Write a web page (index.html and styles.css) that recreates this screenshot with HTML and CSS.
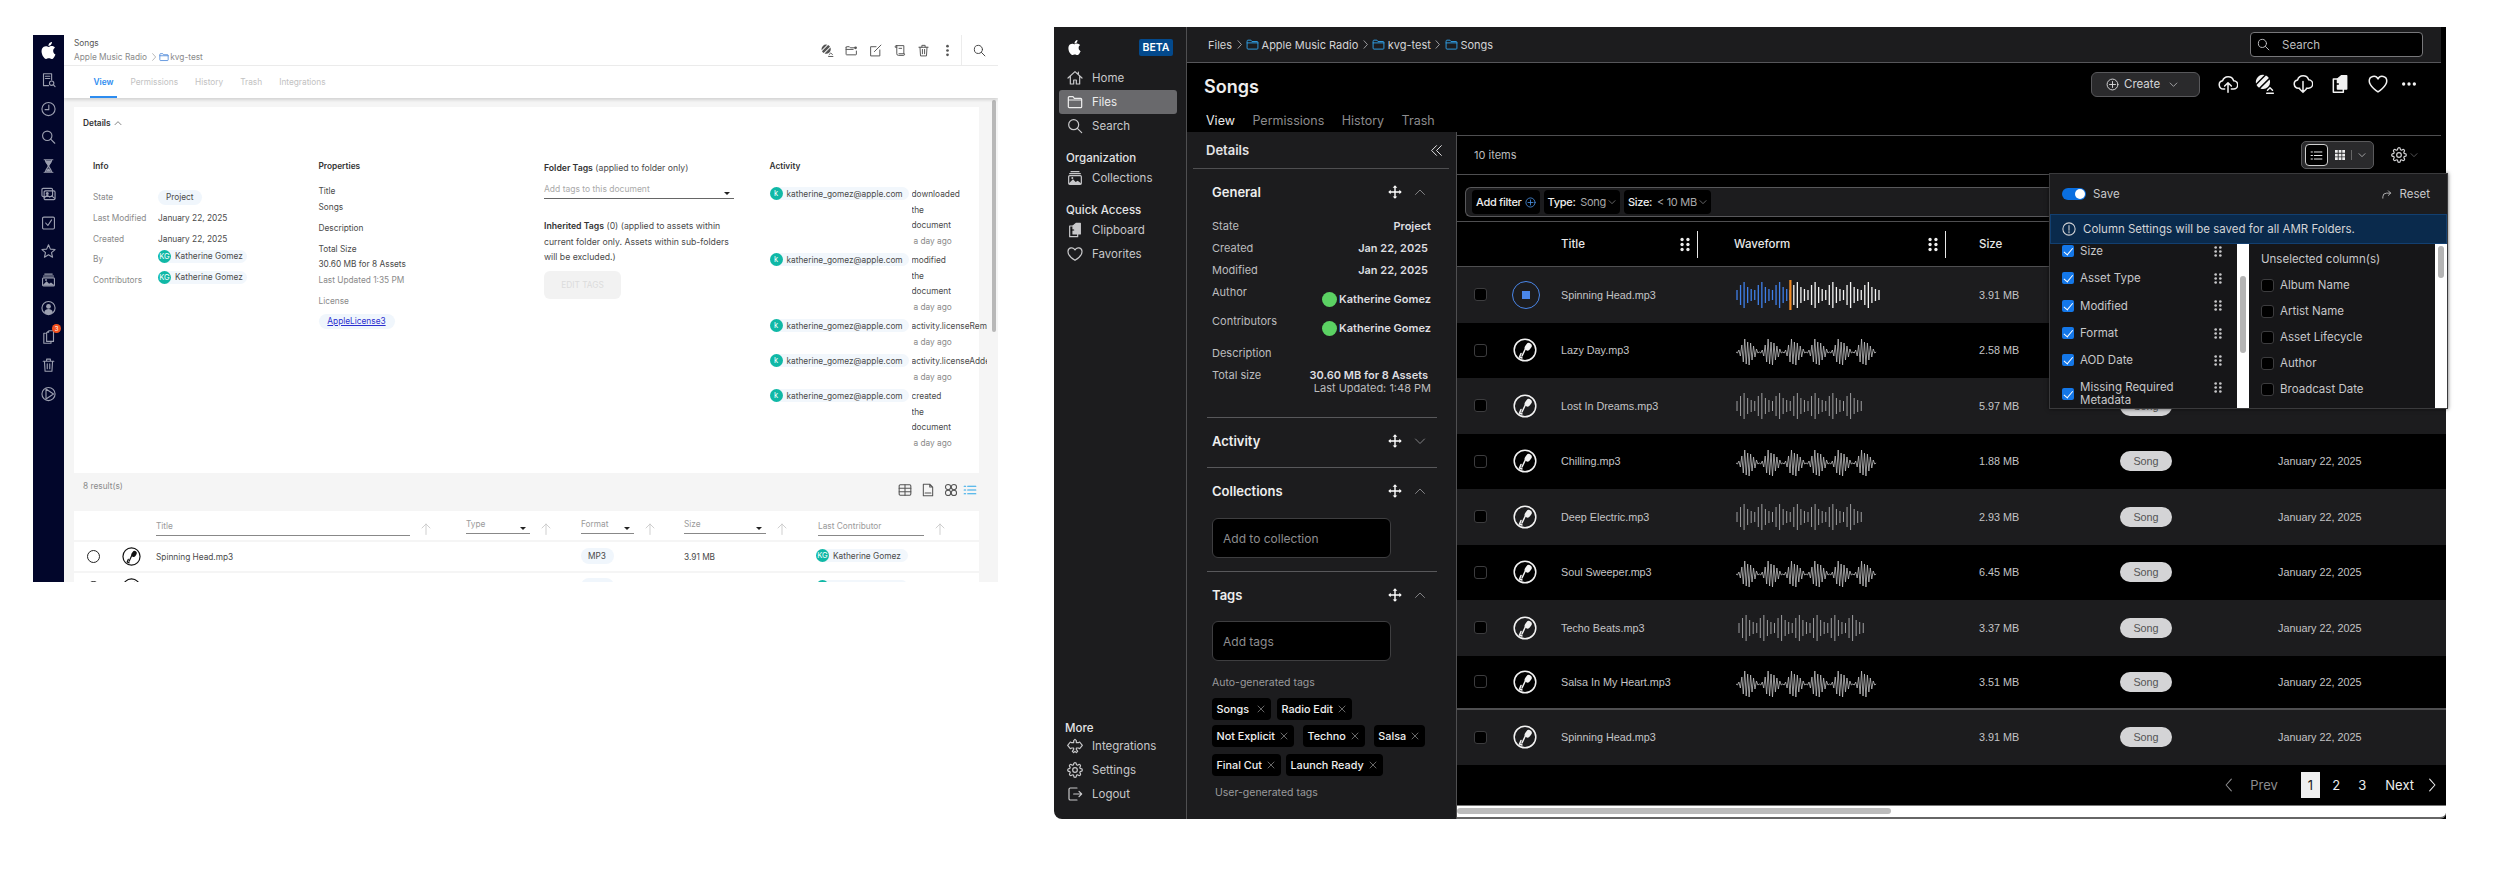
FILE: index.html
```html
<!DOCTYPE html>
<html lang="en">
<head>
<meta charset="utf-8">
<title>Songs</title>
<link rel="stylesheet" href="styles.css">
</head>
<body>
<svg class="sprite" xmlns="http://www.w3.org/2000/svg">
  <symbol id="i-apple" viewBox="0 0 24 24"><path fill="currentColor" stroke="none" d="M12.152 6.896c-.948 0-2.415-1.078-3.96-1.04-2.04.027-3.91 1.183-4.961 3.014-2.117 3.675-.546 9.103 1.519 12.09 1.013 1.454 2.208 3.09 3.792 3.039 1.52-.065 2.09-.987 3.935-.987 1.831 0 2.35.987 3.96.948 1.637-.026 2.676-1.48 3.676-2.948 1.156-1.688 1.636-3.325 1.662-3.415-.039-.013-3.182-1.221-3.22-4.857-.026-3.04 2.48-4.494 2.597-4.559-1.429-2.09-3.623-2.324-4.39-2.376-2-.156-3.675 1.09-4.61 1.09zM15.53 3.83c.843-1.012 1.4-2.427 1.245-3.83-1.207.052-2.662.805-3.532 1.818-.78.896-1.454 2.338-1.273 3.714 1.338.104 2.715-.688 3.559-1.701"/></symbol>
  <symbol id="i-docsearch" viewBox="0 0 24 24"><path d="M12 21H4V2h13v10M7 6h7M7 9.500h7"/><circle cx="17" cy="17" r="3.500"/><path d="m19.500 19.500 3 3"/></symbol>
  <symbol id="i-clock" viewBox="0 0 24 24"><circle cx="12" cy="12" r="10.500"/><path d="M12.500 5.500v7.500H6.500"/></symbol>
  <symbol id="i-search" viewBox="0 0 24 24"><circle cx="10" cy="10" r="7.500"/><path d="m15.500 15.500 6.500 6.500"/></symbol>
  <symbol id="i-hourglass" viewBox="0 0 24 24"><path d="M5 2h14M5 22h14M7 2c0 5 4.500 7 4.500 10S7 17 7 22M17 2c0 5-4.500 7-4.500 10s4.500 5 4.500 10"/><path fill="currentColor" stroke="none" d="M7 3h10c0 4-3.500 6-5 8-1.500-2-5-4-5-8zM8 21c.5-3 3-4 4-5.500 1 1.500 3.500 2.500 4 5.500z"/></symbol>
  <symbol id="i-photos" viewBox="0 0 24 24"><rect x="1.500" y="3" width="17" height="13" rx="2"/><rect x="5" y="7" width="17.500" height="14" rx="2"/><path d="m5 18 5-4 4 3 3-2 5 4"/><circle cx="10" cy="11" r="1.500" fill="currentColor"/></symbol>
  <symbol id="i-check" viewBox="0 0 24 24"><rect x="2.500" y="2.500" width="19" height="19" rx="2"/><path d="m7.500 12 3.500 4 6-9"/></symbol>
  <symbol id="i-star" viewBox="0 0 24 24"><path d="m12 2 3 7 7.500.7-5.700 5 1.700 7.300-6.500-3.900L5.500 22l1.700-7.300-5.700-5L9 9z"/></symbol>
  <symbol id="i-gallery" viewBox="0 0 24 24"><path d="M6 2.500h12M4 5.500h16" /><rect x="2.500" y="8.500" width="19" height="13" rx="1.500"/><path fill="currentColor" stroke="none" d="m3 20 6-6 4 4 3-2 5 4v1H3z"/><circle cx="8" cy="12" r="1.500" fill="currentColor" stroke="none"/></symbol>
  <symbol id="i-user" viewBox="0 0 24 24"><circle cx="12" cy="12" r="10.500"/><circle cx="12" cy="9.500" r="3.800" fill="currentColor" stroke="none"/><path fill="currentColor" stroke="none" d="M5 19c1-4 4-5.500 7-5.500s6 1.500 7 5.500c-2 2-4.500 3-7 3s-5-1-7-3z"/></symbol>
  <symbol id="i-clip" viewBox="0 0 24 24"><path d="M7 6H4.500v16H16v-3"/><path d="M9 5l4-3h7v17H9z"/><path fill="currentColor" stroke="none" d="M9 5l4-3v3z"/></symbol>
  <symbol id="i-clipfill" viewBox="0 0 24 24"><path d="M9 6H4v16h12v-4"/><path fill="currentColor" d="M9 6l5-4h6v16H9z"/><path stroke="#000" d="M7 12h3"/></symbol>
  <symbol id="i-trash" viewBox="0 0 24 24"><path d="M3.500 6h17M9 6V2.500h6V6M5.500 6l1 16h11l1-16M10 10v8M14 10v8"/></symbol>
  <symbol id="i-playc" viewBox="0 0 24 24"><circle cx="12" cy="12" r="10.500"/><path d="M8 4v16l12-8z"/></symbol>
  <symbol id="i-home" viewBox="0 0 24 24"><path d="M1.500 12 12 2.500 22.500 12M5 9.500V21h5v-6h4v6h5V9.500M17 3v3"/></symbol>
  <symbol id="i-folder" viewBox="0 0 24 24"><path d="M2 5.500a1.500 1.500 0 0 1 1.500-1.500H9l2 2.500h9.500A1.500 1.500 0 0 1 22 8v11a1.500 1.500 0 0 1-1.500 1.500h-17A1.500 1.500 0 0 1 2 19zM2 9h20"/></symbol>
  <symbol id="i-heart" viewBox="0 0 24 24"><path d="M12 21.500S1.500 15 1.500 8.500A5.500 5.500 0 0 1 12 6a5.500 5.500 0 0 1 10.500 2.500C22.500 15 12 21.500 12 21.500z"/></symbol>
  <symbol id="i-puzzle" viewBox="0 0 24 24"><path d="M7 7h3V4l2-2 2 2v3h3l2-1 4 5-4 5-2-1h-3v2l2 3-2 2-2-2-2 2-2-2 2-3v-2H7l-2 1-4-5 4-5z"/></symbol>
  <symbol id="i-gear" viewBox="0 0 24 24"><circle cx="12" cy="12" r="3.500"/><path d="M19.400 15a1.650 1.650 0 0 0 .33 1.820l.06.06a2 2 0 0 1 0 2.830 2 2 0 0 1-2.830 0l-.06-.06a1.650 1.650 0 0 0-1.820-.33 1.650 1.650 0 0 0-1 1.510V21a2 2 0 0 1-2 2 2 2 0 0 1-2-2v-.09A1.650 1.650 0 0 0 9 19.400a1.650 1.650 0 0 0-1.820.33l-.06.06a2 2 0 0 1-2.830 0 2 2 0 0 1 0-2.830l.06-.06a1.650 1.650 0 0 0 .33-1.820 1.650 1.650 0 0 0-1.510-1H3a2 2 0 0 1-2-2 2 2 0 0 1 2-2h.09A1.650 1.650 0 0 0 4.600 9a1.650 1.650 0 0 0-.33-1.820l-.06-.06a2 2 0 0 1 0-2.830 2 2 0 0 1 2.830 0l.06.06a1.650 1.650 0 0 0 1.820.33H9a1.650 1.650 0 0 0 1-1.510V3a2 2 0 0 1 2-2 2 2 0 0 1 2 2v.09a1.650 1.650 0 0 0 1 1.510 1.650 1.650 0 0 0 1.820-.33l.06-.06a2 2 0 0 1 2.830 0 2 2 0 0 1 0 2.830l-.06.06a1.650 1.650 0 0 0-.33 1.820V9a1.650 1.650 0 0 0 1.510 1H21a2 2 0 0 1 2 2 2 2 0 0 1-2 2h-.09a1.650 1.650 0 0 0-1.510 1z"/></symbol>
  <symbol id="i-logout" viewBox="0 0 24 24"><path d="M15 3H5a2 2 0 0 0-2 2v14a2 2 0 0 0 2 2h10M10 12h12M18 8l4 4-4 4"/></symbol>
  <symbol id="i-move" viewBox="0 0 24 24"><path fill="currentColor" stroke="none" d="m12 .5-4 4h2.800v6.300H4.500V8l-4 4 4 4v-2.800h6.300v6.300H8l4 4 4-4h-2.800v-6.300h6.300V16l4-4-4-4v2.800h-6.300V4.500H16z"/></symbol>
  <symbol id="i-up" viewBox="0 0 24 24"><path d="m3 17 9-9 9 9"/></symbol>
  <symbol id="i-down" viewBox="0 0 24 24"><path d="m3 8 9 9 9-9"/></symbol>
  <symbol id="i-left" viewBox="0 0 24 24"><path d="M16 2 7 12l9 10"/></symbol>
  <symbol id="i-right" viewBox="0 0 24 24"><path d="m8 2 9 10-9 10"/></symbol>
  <symbol id="i-x" viewBox="0 0 24 24"><path d="m3 3 18 18M21 3 3 21"/></symbol>
  <symbol id="i-arrowup" viewBox="0 0 24 24"><path d="M12 23V2M4 10l8-8 8 8"/></symbol>
  <symbol id="i-dbl" viewBox="0 0 24 24"><path d="M12 3 3 12l9 9M21 3l-9 9 9 9"/></symbol>
  <symbol id="i-plusc" viewBox="0 0 24 24"><circle cx="12" cy="12" r="10"/><path d="M12 6.500v11M6.500 12h11"/></symbol>
  <symbol id="i-upload" viewBox="0 0 24 24"><path d="M8 18H6.500a5 5 0 0 1-1-9.900A7 7 0 0 1 18.800 8a5 5 0 0 1-.3 10H16M12 22V11M8 14.500l4-4 4 4"/></symbol>
  <symbol id="i-download" viewBox="0 0 24 24"><path d="M8 17H6.500a5 5 0 0 1-1-9.900A7 7 0 0 1 18.800 7a5 5 0 0 1-.3 10H16M12 9v13M8 18l4 4 4-4"/></symbol>
  <symbol id="i-tagball" viewBox="0 0 24 24"><path fill="currentColor" stroke="none" d="M11.310 1.190A8.500 8.500 0 0 0 1.190 11.310zM13.170 1.830a8.500 8.500 0 0 1 3.460 3.040L4.870 16.630a8.500 8.500 0 0 1-3.040-3.460zM17.460 6.540A8.500 8.500 0 0 1 6.540 17.460z"/><path d="M15 19.500l3-3 3 3M14 23h8"/></symbol>
  <symbol id="i-folderup" viewBox="0 0 24 24"><path d="M2 6a1 1 0 0 1 1-1h5l2 2h9M2 6v13a1 1 0 0 0 1 1h17a1 1 0 0 0 1-1v-6M2 10h13"/><circle cx="19.500" cy="7" r="2.500" fill="currentColor" stroke="none"/></symbol>
  <symbol id="i-edit" viewBox="0 0 24 24"><path d="M13 5H3v17h17V11M10 14 22 2"/></symbol>
  <symbol id="i-scroll" viewBox="0 0 24 24"><path d="M6 3h14v15M6 3a2 2 0 0 0-2 2v1h3M7 3v15a3 3 0 0 0 3 3h10a2 2 0 0 0 1-3H11M11 8h5"/></symbol>
  <symbol id="i-vdots" viewBox="0 0 24 24"><circle cx="12" cy="4" r="2.500" fill="currentColor" stroke="none"/><circle cx="12" cy="12" r="2.500" fill="currentColor" stroke="none"/><circle cx="12" cy="20" r="2.500" fill="currentColor" stroke="none"/></symbol>
  <symbol id="i-hdots" viewBox="0 0 24 24"><circle cx="4" cy="12" r="2.500" fill="currentColor" stroke="none"/><circle cx="12" cy="12" r="2.500" fill="currentColor" stroke="none"/><circle cx="20" cy="12" r="2.500" fill="currentColor" stroke="none"/></symbol>
  <symbol id="i-handle" viewBox="0 0 12 18"><g fill="currentColor" stroke="none"><circle cx="2.500" cy="3" r="2"/><circle cx="9.500" cy="3" r="2"/><circle cx="2.500" cy="9" r="2"/><circle cx="9.500" cy="9" r="2"/><circle cx="2.500" cy="15" r="2"/><circle cx="9.500" cy="15" r="2"/></g></symbol>
  <symbol id="i-list" viewBox="0 0 24 24"><path d="M8 5.500h14M8 12h14M8 18.500h14M2 5.500h2.500M2 12h2.500M2 18.500h2.500"/></symbol>
  <symbol id="i-grid" viewBox="0 0 24 24"><path fill="currentColor" stroke="none" d="M2 2h5.500v5.500H2zM9.300 2h5.500v5.500H9.300zM16.500 2H22v5.500h-5.500zM2 9.300h5.500v5.500H2zM9.300 9.300h5.500v5.500H9.300zM16.500 9.300H22v5.500h-5.500zM2 16.500h5.500V22H2zM9.300 16.500h5.500V22H9.300zM16.500 16.500H22V22h-5.500z"/></symbol>
  <symbol id="i-info" viewBox="0 0 24 24"><circle cx="12" cy="12" r="10.500"/><path d="M12 6v8M12 16.500v2"/></symbol>
  <symbol id="i-reset" viewBox="0 0 24 24"><path d="M4 20v-3a8 8 0 0 1 8-8h9M16 4l5 5-5 5" /></symbol>
  <symbol id="i-table" viewBox="0 0 24 24"><rect x="2" y="3" width="20" height="18" rx="2"/><path d="M2 9h20M2 15h20M12 3v18"/></symbol>
  <symbol id="i-file" viewBox="0 0 24 24"><path d="M4 22V2h11l5 5v15zM15 2v5h5M7 17h10"/></symbol>
  <symbol id="i-rings" viewBox="0 0 24 24"><circle cx="7" cy="7" r="4.500"/><circle cx="17" cy="7" r="4.500"/><circle cx="7" cy="17" r="4.500"/><circle cx="17" cy="17" r="4.500"/></symbol>
  <symbol id="i-mic" viewBox="0 0 24 24"><circle cx="12" cy="12" r="10.800"/><rect x="12.300" y="4.800" width="5.800" height="8" rx="2.900" transform="rotate(35 15.200 8.800)" fill="currentColor" stroke="none"/><path d="m12.500 10.500-3.500 7.500M8 15.500l-1.500 3.500 2.500 1"/></symbol>
  <symbol id="w-bars" viewBox="0 0 146 30"><path d="M1 10v10m3.550-15v20m3.550-23v26m3.550-21v16m3.550-14v12m3.550-11v10m3.550-15v20m3.550-23v26m3.550-21v16m3.550-14v12m3.550-11v10m3.550-15v20m3.550-23v26m3.550-21v16m3.550-14v12m3.550-11v10m3.550-15v20m3.550-23v26m3.550-21v16m3.550-14v12m3.550-11v10m3.550-15v20m3.550-23v26m3.550-21v16m3.550-14v12m3.550-11v10m3.550-15v20m3.550-23v26m3.550-21v16m3.550-14v12m3.550-11v10m3.550-15v20m3.550-23v26m3.550-21v16m3.550-14v12m3.550-11v10"/></symbol>
  <symbol id="w-spike" viewBox="0 0 146 30"><path d="M0 17l1.460 1 1.460-3 1.460 6 1.460-11 1.460 17 1.460-23 1.460 25 1.460-22 1.460 23 1.460-22 1.460 17 1.460-14 1.460 11 1.460-8 1.460 4 1.460-1 1.460 1 1.460-3 1.460 6 1.460-11 1.460 17 1.460-23 1.460 25 1.460-22 1.460 23 1.460-22 1.460 17 1.460-14 1.460 11 1.460-8 1.460 4 1.460-1 1.460 1 1.460-3 1.460 6 1.460-11 1.460 17 1.460-23 1.460 25 1.460-22 1.460 23 1.460-22 1.460 17 1.460-14 1.460 11 1.460-8 1.460 4 1.460-1 1.460 1 1.460-3 1.460 6 1.460-11 1.460 17 1.460-23 1.460 25 1.460-22 1.460 23 1.460-22 1.460 17 1.460-14 1.460 11 1.460-8 1.460 4 1.460-1 1.460 1 1.460-3 1.460 6 1.460-11 1.460 17 1.460-23 1.460 25 1.460-22 1.460 23 1.460-22 1.460 17 1.460-14 1.460 11 1.460-8 1.460 4 1.460-1 1.460 1 1.460-3 1.460 6 1.460-11 1.460 17 1.460-23 1.460 25 1.460-22 1.460 23 1.460-22 1.460 17 1.460-14 1.460 11 1.460-8 1.460 4 1.460-1"/></symbol>
</svg>

<section class="light">
  <nav class="rail">
    <svg class="ic rail-logo"><use href="#i-apple"/></svg>
    <svg class="ic"><use href="#i-docsearch"/></svg>
    <svg class="ic"><use href="#i-clock"/></svg>
    <svg class="ic"><use href="#i-search"/></svg>
    <svg class="ic"><use href="#i-hourglass"/></svg>
    <svg class="ic"><use href="#i-photos"/></svg>
    <svg class="ic"><use href="#i-check"/></svg>
    <svg class="ic"><use href="#i-star"/></svg>
    <svg class="ic"><use href="#i-gallery"/></svg>
    <svg class="ic"><use href="#i-user"/></svg>
    <span class="rail-badged"><svg class="ic"><use href="#i-clip"/></svg><span class="badge">3</span></span>
    <svg class="ic"><use href="#i-trash"/></svg>
    <svg class="ic"><use href="#i-playc"/></svg>
  </nav>
  <div class="lmain">
    <header class="lhead">
      <div class="lcrumbs">
        <div class="lcrumb-title">Songs</div>
        <div class="lcrumb-path">Apple Music Radio <svg class="ic ic-8"><use href="#i-right"/></svg> <svg class="ic ic-10 blue"><use href="#i-folder"/></svg>kvg-test</div>
      </div>
      <div class="lactions">
        <svg class="ic ic-13"><use href="#i-tagball"/></svg>
        <svg class="ic ic-13"><use href="#i-folderup"/></svg>
        <svg class="ic ic-13"><use href="#i-edit"/></svg>
        <svg class="ic ic-13"><use href="#i-scroll"/></svg>
        <svg class="ic ic-13"><use href="#i-trash"/></svg>
        <svg class="ic ic-13"><use href="#i-vdots"/></svg>
        <span class="lsearch"><svg class="ic ic-13"><use href="#i-search"/></svg></span>
      </div>
    </header>
    <div class="ltabs">
      <span class="ltab on">View</span><span class="ltab">Permissions</span><span class="ltab">History</span><span class="ltab">Trash</span><span class="ltab">Integrations</span>
    </div>
    <div class="lbody">
      <div class="lcontent">
        <div class="lpanel">
          <div class="ldetails">Details <svg class="ic ic-8"><use href="#i-up"/></svg></div>
          <div class="lcols">
            <div class="lcol">
              <h3 class="lh">Info</h3>
              <div class="irow"><span class="ilabel">State</span><span class="pill">Project</span></div>
              <div class="irow"><span class="ilabel">Last Modified</span><span>January 22, 2025</span></div>
              <div class="irow"><span class="ilabel">Created</span><span>January 22, 2025</span></div>
              <div class="irow"><span class="ilabel">By</span><span class="who"><i class="ava">KG</i>Katherine Gomez</span></div>
              <div class="irow"><span class="ilabel">Contributors</span><span class="who"><i class="ava">KG</i>Katherine Gomez</span></div>
            </div>
            <div class="lcol">
              <h3 class="lh">Properties</h3>
              <div class="pgroup"><p>Title</p><p>Songs</p></div>
              <div class="pgroup"><p>Description</p></div>
              <div class="pgroup"><p>Total Size</p><p>30.60 MB for 8 Assets</p><p class="muted">Last Updated 1:35 PM</p></div>
              <div class="pgroup"><p class="muted">License</p><a class="lic" href="#">AppleLicense3</a></div>
            </div>
            <div class="lcol">
              <p class="ftitle"><b>Folder Tags</b> (applied to folder only)</p>
              <div class="finput"><span>Add tags to this document</span><i class="caret"></i></div>
              <p class="inh"><b>Inherited Tags</b> (0) (applied to assets within current folder only. Assets within sub-folders will be excluded.)</p>
              <button class="editbtn" type="button">EDIT TAGS</button>
            </div>
            <div class="lcol">
              <h3 class="lh">Activity</h3>
              <div class="act"><span class="who mail"><i class="ava">k</i>katherine_gomez@apple.com</span><div class="acttext"><p>downloaded</p><p>the</p><p>document</p><p class="ago">a day ago</p></div></div>
              <div class="act"><span class="who mail"><i class="ava">k</i>katherine_gomez@apple.com</span><div class="acttext"><p>modified</p><p>the</p><p>document</p><p class="ago">a day ago</p></div></div>
              <div class="act"><span class="who mail"><i class="ava">k</i>katherine_gomez@apple.com</span><div class="acttext"><p>activity.licenseRemoved</p><p class="ago">a day ago</p></div></div>
              <div class="act"><span class="who mail"><i class="ava">k</i>katherine_gomez@apple.com</span><div class="acttext"><p>activity.licenseAdded</p><p class="ago">a day ago</p></div></div>
              <div class="act"><span class="who mail"><i class="ava">k</i>katherine_gomez@apple.com</span><div class="acttext"><p>created</p><p>the</p><p>document</p><p class="ago">a day ago</p></div></div>
            </div>
          </div>
        </div>
        <div class="lresults">
          <span>8 result(s)</span>
          <div class="lviews">
            <svg class="ic ic-14"><use href="#i-table"/></svg>
            <svg class="ic ic-14"><use href="#i-file"/></svg>
            <svg class="ic ic-14"><use href="#i-rings"/></svg>
            <svg class="ic ic-14 sky"><use href="#i-list"/></svg>
          </div>
        </div>
        <div class="ltable">
          <div class="lgrid lthead">
            <span></span>
            <span class="lth"><b class="thu w254">Title</b><svg class="ic ic-12 faint"><use href="#i-arrowup"/></svg></span>
            <span class="lth"><b class="thu thd w64">Type<i class="caret"></i></b><svg class="ic ic-12 faint"><use href="#i-arrowup"/></svg></span>
            <span class="lth"><b class="thu thd w53">Format<i class="caret"></i></b><svg class="ic ic-12 faint"><use href="#i-arrowup"/></svg></span>
            <span class="lth"><b class="thu thd w82">Size<i class="caret"></i></b><svg class="ic ic-12 faint"><use href="#i-arrowup"/></svg></span>
            <span class="lth"><b class="thu w106">Last Contributor</b><svg class="ic ic-12 faint"><use href="#i-arrowup"/></svg></span>
          </div>
          <div class="lgrid lrow">
            <span class="lsel"><i class="radio"></i><svg class="ic lmic"><use href="#i-mic"/></svg></span>
            <span>Spinning Head.mp3</span><span></span><span><i class="pill pill-n">MP3</i></span><span>3.91 MB</span><span class="who who-cell"><i class="ava">KG</i>Katherine Gomez</span>
          </div>
          <div class="lgrid lrow">
            <span class="lsel"><i class="radio"></i><svg class="ic lmic"><use href="#i-mic"/></svg></span>
            <span></span><span></span><span><i class="pill pill-n"></i></span><span></span><span class="who who-cell"><i class="ava"></i></span>
          </div>
        </div>
      </div>
      <div class="lgutter"><i class="lthumb"></i></div>
    </div>
  </div>
</section>

<section class="dark">
  <aside class="dside">
    <div class="dlogo"><svg class="ic ic-15 white"><use href="#i-apple"/></svg><span class="beta">BETA</span></div>
    <div class="dnav">
      <a class="ditem"><svg class="ic"><use href="#i-home"/></svg>Home</a>
      <a class="ditem on"><svg class="ic"><use href="#i-folder"/></svg>Files</a>
      <a class="ditem"><svg class="ic"><use href="#i-search"/></svg>Search</a>
      <div class="dgroup">Organization</div>
      <a class="ditem"><svg class="ic"><use href="#i-gallery"/></svg>Collections</a>
      <div class="dgroup">Quick Access</div>
      <a class="ditem"><svg class="ic"><use href="#i-clipfill"/></svg>Clipboard</a>
      <a class="ditem"><svg class="ic"><use href="#i-heart"/></svg>Favorites</a>
    </div>
    <div class="dnav dnav-end">
      <div class="dgroup dgroup-end">More</div>
      <a class="ditem"><svg class="ic"><use href="#i-puzzle"/></svg>Integrations</a>
      <a class="ditem"><svg class="ic"><use href="#i-gear"/></svg>Settings</a>
      <a class="ditem"><svg class="ic"><use href="#i-logout"/></svg>Logout</a>
    </div>
  </aside>
  <div class="dmain">
    <header class="dcrumbbar">
      <div class="dcrumbs"><span>Files</span><svg class="ic ic-9"><use href="#i-right"/></svg><svg class="ic ic-13 folderblue"><use href="#i-folder"/></svg><span>Apple Music Radio</span><svg class="ic ic-9"><use href="#i-right"/></svg><svg class="ic ic-13 folderblue"><use href="#i-folder"/></svg><span>kvg-test</span><svg class="ic ic-9"><use href="#i-right"/></svg><svg class="ic ic-13 folderblue"><use href="#i-folder"/></svg><span>Songs</span></div>
      <div class="dsearch"><svg class="ic ic-13"><use href="#i-search"/></svg>Search</div>
    </header>
    <div class="dtitle">
      <h1>Songs</h1>
      <div class="dactions">
        <button class="create" type="button"><svg class="ic ic-13"><use href="#i-plusc"/></svg>Create<svg class="ic ic-9"><use href="#i-down"/></svg></button>
        <svg class="ic ic-20"><use href="#i-upload"/></svg>
        <svg class="ic ic-20"><use href="#i-tagball"/></svg>
        <svg class="ic ic-20"><use href="#i-download"/></svg>
        <svg class="ic ic-20"><use href="#i-clipfill"/></svg>
        <svg class="ic ic-20"><use href="#i-heart"/></svg>
        <svg class="ic ic-16 last"><use href="#i-hdots"/></svg>
      </div>
    </div>
    <div class="dtabs"><span class="on">View</span><span>Permissions</span><span>History</span><span>Trash</span></div>
    <div class="dwork">
      <div class="ddetails">
        <div class="ddhead"><span>Details</span><svg class="ic ic-13"><use href="#i-dbl"/></svg></div>
        <div class="sec sec-general">
          <div class="sechead"><span>General</span><svg class="ic ic-14 white"><use href="#i-move"/></svg><svg class="ic ic-12 dim"><use href="#i-up"/></svg></div>
          <div class="kv"><span>State</span><b>Project</b></div>
          <div class="kv"><span>Created</span><b class="ind">Jan 22, 2025</b></div>
          <div class="kv"><span>Modified</span><b class="ind">Jan 22, 2025</b></div>
          <div class="kv kv-ava"><span>Author</span><b class="kvwho"><i class="gdot"></i>Katherine Gomez</b></div>
          <div class="kv kv-ava"><span>Contributors</span><b class="kvwho"><i class="gdot"></i>Katherine Gomez</b></div>
          <div class="kv"><span>Description</span></div>
          <div class="kv kv-total"><span>Total size</span><div class="kvtot"><b class="ind">30.60 MB for 8 Assets</b><small>Last Updated: 1:48 PM</small></div></div>
        </div>
        <div class="sec sec-activity">
          <div class="sechead"><span>Activity</span><svg class="ic ic-14 white"><use href="#i-move"/></svg><svg class="ic ic-12 dim"><use href="#i-down"/></svg></div>
        </div>
        <div class="sec sec-coll">
          <div class="sechead"><span>Collections</span><svg class="ic ic-14 white"><use href="#i-move"/></svg><svg class="ic ic-12 dim"><use href="#i-up"/></svg></div>
          <div class="dinput">Add to collection</div>
        </div>
        <div class="sec sec-tags">
          <div class="sechead"><span>Tags</span><svg class="ic ic-14 white"><use href="#i-move"/></svg><svg class="ic ic-12 dim"><use href="#i-up"/></svg></div>
          <div class="dinput">Add tags</div>
          <p class="taglab">Auto-generated tags</p>
          <div class="chips chips-1"><span class="chip chip-wide">Songs<svg class="ic ic-8"><use href="#i-x"/></svg></span><span class="chip">Radio Edit<svg class="ic ic-8"><use href="#i-x"/></svg></span></div>
          <div class="chips chips-2"><span class="chip">Not Explicit<svg class="ic ic-8"><use href="#i-x"/></svg></span><span class="chip">Techno<svg class="ic ic-8"><use href="#i-x"/></svg></span><span class="chip">Salsa<svg class="ic ic-8"><use href="#i-x"/></svg></span></div>
          <div class="chips chips-3"><span class="chip">Final Cut<svg class="ic ic-8"><use href="#i-x"/></svg></span><span class="chip">Launch Ready<svg class="ic ic-8"><use href="#i-x"/></svg></span></div>
          <p class="taglab taglab-user">User-generated tags</p>
        </div>
      </div>
      <div class="dtable">
        <div class="dtool">
          <span>10 items</span>
          <div class="dtoolright">
            <div class="vtoggle"><span class="vbtn"><svg class="ic ic-13"><use href="#i-list"/></svg></span><svg class="ic ic-12 vgrid"><use href="#i-grid"/></svg><i class="vsep"></i><svg class="ic ic-8"><use href="#i-down"/></svg></div>
            <svg class="ic ic-16"><use href="#i-gear"/></svg><svg class="ic ic-8 dim"><use href="#i-down"/></svg>
          </div>
        </div>
        <div class="dfilter">
          <div class="fbox">
            <span class="fchip"><b>Add filter</b><svg class="ic ic-11 bluei"><use href="#i-plusc"/></svg></span>
            <span class="fchip"><b>Type:</b> Song<svg class="ic ic-8"><use href="#i-down"/></svg></span>
            <span class="fchip"><b>Size:</b> &lt; 10 MB<svg class="ic ic-8"><use href="#i-down"/></svg></span>
          </div>
        </div>
        <div class="dgrid dthead">
          <span></span><span></span>
          <span class="dth dth-title">Title<svg class="ic hnd"><use href="#i-handle"/></svg><i class="thline"></i></span>
          <span class="dth dth-wave">Waveform<svg class="ic hnd"><use href="#i-handle"/></svg><i class="thline"></i></span>
          <span>Size</span>
        </div>
        <div class="dgrid drow alt">
          <i class="cb"></i>
          <span class="stopbtn"><i></i></span>
          <span>Spinning Head.mp3</span>
          <svg class="wave wave-live" viewBox="0 0 146 30"><path class="wblue" d="M1 10v10m3.550-15v20m3.550-23v26m3.550-21v16m3.550-14v12m3.550-11v10m3.550-15v20m3.550-23v26m3.550-21v16m3.550-14v12m3.550-11v10m3.550-15v20m3.550-23v26m3.550-21v16m3.550-14v12"/><path class="wwhite" d="M54.250 10v10m3.550-15v20m3.550-23v26m3.550-21v16m3.550-14v12m3.550-11v10m3.550-15v20m3.550-23v26m3.550-21v16m3.550-14v12m3.550-11v10m3.550-15v20m3.550-23v26m3.550-21v16m3.550-14v12m3.550-11v10m3.550-15v20m3.550-23v26m3.550-21v16m3.550-14v12m3.550-11v10m3.550-15v20m3.550-23v26m3.550-21v16m3.550-14v12m3.550-11v10"/><rect class="wmark" x="53.300" y="0" width="2.200" height="30"/></svg>
          <span>3.91 MB</span><span class="song">Song</span><span></span>
        </div>
        <div class="dgrid drow">
          <i class="cb"></i><svg class="ic dmic"><use href="#i-mic"/></svg><span>Lazy Day.mp3</span><svg class="wave"><use href="#w-spike"/></svg><span>2.58 MB</span><span class="song">Song</span><span></span>
        </div>
        <div class="dgrid drow alt">
          <i class="cb"></i><svg class="ic dmic"><use href="#i-mic"/></svg><span>Lost In Dreams.mp3</span><svg class="wave"><use href="#w-bars"/></svg><span>5.97 MB</span><span class="song">Song</span><span></span>
        </div>
        <div class="dgrid drow">
          <i class="cb"></i><svg class="ic dmic"><use href="#i-mic"/></svg><span>Chilling.mp3</span><svg class="wave"><use href="#w-spike"/></svg><span>1.88 MB</span><span class="song">Song</span><span>January 22, 2025</span>
        </div>
        <div class="dgrid drow alt">
          <i class="cb"></i><svg class="ic dmic"><use href="#i-mic"/></svg><span>Deep Electric.mp3</span><svg class="wave"><use href="#w-bars"/></svg><span>2.93 MB</span><span class="song">Song</span><span>January 22, 2025</span>
        </div>
        <div class="dgrid drow">
          <i class="cb"></i><svg class="ic dmic"><use href="#i-mic"/></svg><span>Soul Sweeper.mp3</span><svg class="wave"><use href="#w-spike"/></svg><span>6.45 MB</span><span class="song">Song</span><span>January 22, 2025</span>
        </div>
        <div class="dgrid drow alt">
          <i class="cb"></i><svg class="ic dmic"><use href="#i-mic"/></svg><span>Techo Beats.mp3</span><svg class="wave wave-shift"><use href="#w-bars"/></svg><span>3.37 MB</span><span class="song">Song</span><span>January 22, 2025</span>
        </div>
        <div class="dgrid drow drow-last">
          <i class="cb"></i><svg class="ic dmic"><use href="#i-mic"/></svg><span>Salsa In My Heart.mp3</span><svg class="wave"><use href="#w-spike"/></svg><span>3.51 MB</span><span class="song">Song</span><span>January 22, 2025</span>
        </div>
        <div class="dgrid drow alt">
          <i class="cb"></i><svg class="ic dmic"><use href="#i-mic"/></svg><span>Spinning Head.mp3</span><span></span><span>3.91 MB</span><span class="song">Song</span><span>January 22, 2025</span>
        </div>
        <div class="dpager">
          <svg class="ic ic-14 dim"><use href="#i-left"/></svg><span class="prev">Prev</span><span class="page on">1</span><span class="page">2</span><span class="page">3</span><span class="next">Next</span><svg class="ic ic-14"><use href="#i-right"/></svg>
        </div>
        <div class="dscroll"><i></i></div>
      </div>
    </div>
  </div>

  <div class="popover">
    <div class="pophead">
      <span class="toggle"><i></i></span><span class="poplabel">Save</span>
      <span class="popreset"><svg class="ic ic-11"><use href="#i-reset"/></svg>Reset</span>
    </div>
    <div class="popinfo"><svg class="ic ic-14"><use href="#i-info"/></svg>Column Settings will be saved for all AMR Folders.</div>
    <div class="poplists">
      <div class="poplist">
        <div class="popsel">
          <div class="psitem"><i class="cbon"></i><span>Size</span><svg class="ic hnd"><use href="#i-handle"/></svg></div>
          <div class="psitem"><i class="cbon"></i><span>Asset Type</span><svg class="ic hnd"><use href="#i-handle"/></svg></div>
          <div class="psitem"><i class="cbon"></i><span>Modified</span><svg class="ic hnd"><use href="#i-handle"/></svg></div>
          <div class="psitem"><i class="cbon"></i><span>Format</span><svg class="ic hnd"><use href="#i-handle"/></svg></div>
          <div class="psitem"><i class="cbon"></i><span>AOD Date</span><svg class="ic hnd"><use href="#i-handle"/></svg></div>
          <div class="psitem psitem-2"><i class="cbon"></i><span>Missing Required Metadata</span><svg class="ic hnd"><use href="#i-handle"/></svg></div>
        </div>
        <div class="poptrack track-a"><i></i></div>
      </div>
      <div class="poplist poplist-r">
        <div class="popun">
          <p class="unt">Unselected column(s)</p>
          <div class="puitem"><i class="cb"></i>Album Name</div>
          <div class="puitem"><i class="cb"></i>Artist Name</div>
          <div class="puitem"><i class="cb"></i>Asset Lifecycle</div>
          <div class="puitem"><i class="cb"></i>Author</div>
          <div class="puitem"><i class="cb"></i>Broadcast Date</div>
          <div class="puitem"><i class="cb"></i></div>
        </div>
        <div class="poptrack track-b"><i></i></div>
      </div>
    </div>
  </div>
</section>
</body>
</html>
```

FILE: styles.css
```css
* { box-sizing: border-box; }
html, body { margin: 0; padding: 0; }
body { display: flex; align-items: flex-start; width: 2500px; height: 882px; overflow: hidden; background: #fff; font-family: Inter, "Liberation Sans", sans-serif; }
p, h1, h3 { margin: 0; font-weight: inherit; font-size: inherit; }
i { font-style: normal; }
.sprite { display: none; }
.ic { width: 16px; height: 16px; flex: none; fill: none; stroke: currentColor; stroke-width: 1.8; stroke-linecap: round; stroke-linejoin: round; overflow: visible; }
.ic-8 { width: 8px; height: 8px; }
.ic-9 { width: 9px; height: 9px; }
.ic-10 { width: 10px; height: 10px; }
.ic-11 { width: 11px; height: 11px; }
.ic-12 { width: 12px; height: 12px; }
.ic-13 { width: 13px; height: 13px; }
.ic-14 { width: 14px; height: 14px; }
.ic-15 { width: 15px; height: 15px; }
.ic-20 { width: 20px; height: 20px; }
.white { color: #fff; }
.blue { color: #3a7bd5; }
.sky { color: #2ba6e8; }
.faint { color: #c9c9c9; }
.dim { color: #8c8c8e; }

/* ---------- light screenshot ---------- */
.light { display: flex; flex: none; width: 965px; height: 547px; margin: 35px 0 0 33px; overflow: hidden; font-size: 8.300px; color: #4a4a4a; }
.rail { flex: none; width: 31px; background: #02062b; color: #9c9fb0; display: flex; flex-direction: column; align-items: center; padding-top: 5px; gap: 12.500px; }
.rail .ic { width: 15px; height: 16px; }
.rail .rail-logo { width: 17px; height: 21px; color: #fff; margin-bottom: -1.500px; }
.rail-badged { position: relative; display: flex; }
.badge { position: absolute; top: -5px; right: -5px; width: 9px; height: 9px; border-radius: 50%; background: #f4511e; color: #fff; font-size: 6px; line-height: 9px; text-align: center; }
.lmain { flex: 1; min-width: 0; display: flex; flex-direction: column; }
.lhead { flex: none; height: 31px; display: flex; justify-content: space-between; align-items: center; border-bottom: 1px solid #ececec; padding-left: 10px; }
.lcrumb-title { line-height: 14px; color: #555; }
.lcrumb-path { line-height: 14px; color: #8a8a8a; display: flex; align-items: center; gap: 1px; white-space: pre; }
.lactions { display: flex; align-items: center; gap: 11px; color: #555; height: 100%; }
.lsearch { display: flex; align-items: center; height: 100%; border-left: 1px solid #ececec; padding: 0 12px 0 11px; margin-left: -3.500px; color: #444; }
.ltabs { flex: none; height: 32px; display: flex; align-items: stretch; padding-left: 26px; gap: 0; box-shadow: 0 2px 3px rgba(0,0,0,.14); position: relative; z-index: 1; background: #fff; }
.ltab { display: flex; align-items: center; padding: 1px 3.500px 0; margin-right: 10px; color: #c2c2c2; border-bottom: 2px solid transparent; }
.ltab.on { color: #2d8cf0; font-weight: 600; border-bottom-color: #2d8cf0; }
.lbody { flex: 1; min-height: 0; display: flex; background: #f5f5f5; }
.lcontent { width: 925px; flex: none; padding: 9px 10px 0; overflow: hidden; }
.lgutter { flex: 1; padding: 2px 0 0 3px; }
.lthumb { display: block; width: 4px; height: 232px; background: #b8b8b8; border-radius: 2px; }
.lpanel { height: 366px; background: #fff; padding: 10px 0 0 9px; }
.ldetails { font-weight: 600; color: #333; line-height: 12px; display: flex; align-items: center; gap: 3px; }
.lcols { display: grid; grid-template-columns: repeat(4, 225.500px); margin: 31px 0 0 10px; }
.lcol { min-width: 0; }
.lh { font-weight: 600; color: #333; line-height: 12px; margin-bottom: 15px; }
.irow { display: flex; align-items: center; height: 20.700px; }
.irow .who { margin-top: -6px; }
.ilabel { width: 65px; flex: none; color: #8a8a8a; }
.pill { display: inline-flex; align-items: center; height: 15px; padding: 0 8px; border-radius: 8px; background: #f0f6fc; }
.pill-n { margin-top: -2px; padding: 0 7px; height: 16px; min-width: 33px; }
.who { display: inline-flex; align-items: center; height: 13px; background: #f2f7fc; border-radius: 7px; padding-right: 4px; white-space: nowrap; }
.who-cell { justify-self: start; margin-top: -2px; margin-left: -2px; min-width: 92px; }
.ava { width: 13px; height: 13px; border-radius: 50%; background: #10b8a6; color: #fff; font-size: 7.500px; line-height: 13px; text-align: center; margin-right: 4px; flex: none; }
.pgroup { margin-bottom: 5.500px; line-height: 15.500px; }
.pgroup:first-of-type { margin-top: -3px; }
.muted { color: #8a8a8a; }
.lic { display: block; width: 76px; height: 15px; margin-top: 5px; line-height: 15px; text-align: center; background: #f0f6fc; border-radius: 8px; color: #2a2fd0; }
.ftitle { margin-top: 2px; line-height: 12px; font-size: 8.700px; }
.ftitle b, .inh b { font-weight: 600; color: #333; }
.finput { width: 190px; height: 25px; padding-top: 10px; border-bottom: 1px solid #666; display: flex; justify-content: space-between; color: #aaa; line-height: 11px; font-size: 8.500px; }
.caret { display: inline-block; width: 0; height: 0; border: 3px solid transparent; border-top: 3.500px solid #222; border-bottom: 0; align-self: flex-end; margin: 0 4px 3px 0; }
.inh { width: 192px; line-height: 15.500px; margin-top: 20px; font-size: 8.700px; }
.editbtn { display: block; width: 77px; height: 28px; margin-top: 5px; border: 0; border-radius: 6px; background: #f2f2f2; color: #dcdcdc; font: inherit; }
.act { display: flex; align-items: flex-start; margin-bottom: 4px; }
.mail { width: 139px; flex: none; padding-right: 0; }
.acttext { width: 75px; margin-left: 3px; flex: none; overflow: hidden; line-height: 15.500px; white-space: nowrap; }
.ago { color: #8a8a8a; margin-left: 2px; }
.lresults { height: 38px; display: flex; justify-content: space-between; padding: 7px 2px 0 9px; color: #8a8a8a; line-height: 12px; }
.lviews { display: flex; gap: 9px; color: #555; margin-top: 3px; padding-right: 0; }
.lviews .sky { margin-left: -4px; }
.ltable { width: 905px; background: #f5f5f5; }
.lgrid { display: grid; grid-template-columns: 82px 310px 115px 103px 134px 1fr; align-items: center; background: #fff; }
.lthead { height: 29px; margin-bottom: 2px; color: #9a9a9a; align-items: end; }
.lth { display: flex; align-items: flex-end; gap: 10px; }
.lth .ic { margin-bottom: 5px; }
.thu { position: relative; display: flex; align-items: center; font-weight: 400; height: 20px; border-bottom: 1.500px solid #888; margin-bottom: 4px; }
.thd { margin-bottom: 6px; padding-bottom: 0; }
.thu .caret { position: absolute; right: 0; bottom: 0; }
.w254 { width: 254px; }
.w64 { width: 64px; }
.w53 { width: 53px; }
.w82 { width: 82px; }
.w106 { width: 106px; }
.lrow { height: 29px; margin-bottom: 2px; }
.lsel { display: flex; align-items: center; padding-left: 13px; gap: 22px; color: #111; }
.radio { width: 13px; height: 13px; border: 1px solid #222; border-radius: 50%; flex: none; }
.lmic { width: 19px; height: 19px; margin-top: 0; stroke-width: 1.500; }

/* ---------- dark screenshot ---------- */
.dark { position: relative; display: flex; flex: none; width: 1392px; height: 792px; margin: 27px 0 0 56px; color: #d4d4d6; font-size: 11.500px; }
.dside { flex: none; width: 133px; display: flex; flex-direction: column; background: #1c1c1e; border-right: 1px solid #4f4f51; border-radius: 0 0 0 8px; padding: 12px 0 13px; }
.dlogo { display: flex; align-items: center; justify-content: space-between; height: 17px; margin: 0 13px 10px 13px; }
.beta { width: 34px; height: 17px; border-radius: 2px; background: #03498c; color: #fff; font-size: 10.500px; font-weight: 600; line-height: 17px; text-align: center; }
.dnav { display: flex; flex-direction: column; }
.dnav-end { margin-top: auto; }
.ditem { display: flex; align-items: center; height: 24px; margin: 0 9px 0 5px; padding-left: 8px; gap: 9px; border-radius: 3px; color: #c8c8ca; }
.ditem.on { background: #69696c; color: #eee; }
.dgroup { margin: 14px 0 2px 12px; line-height: 12px; font-weight: 500; color: #e4e4e6; }
.dgroup-end { margin: 0 0 0 11px; }
.dmain { flex: 1; min-width: 0; display: flex; flex-direction: column; background: #000; }
.dcrumbbar { flex: none; height: 36px; margin-right: 5px; display: flex; align-items: center; justify-content: space-between; background: #1c1c1e; border-bottom: 1px solid #56565a; padding: 0 18px 0 21px; }
.dcrumbs { display: flex; align-items: center; gap: 2.500px; font-size: 11px; }
.folderblue { color: #2f9be0; }
.dsearch { width: 173px; height: 25px; display: flex; align-items: center; gap: 12px; padding-left: 6px; border: 1px solid #77777a; border-radius: 4px; background: #000; color: #bcbcbe; }
.dtitle { flex: none; height: 42px; margin-right: 5px; display: flex; align-items: center; justify-content: space-between; padding: 0 24px 0 17px; }
.dtitle h1 { font-size: 18px; font-weight: 600; color: #eee; margin-top: 4px; }
.dactions { display: flex; align-items: center; gap: 17.500px; color: #f2f2f2; }
.dactions .last { margin-left: -4px; }
.create { display: flex; align-items: center; gap: 5px; width: 109px; height: 25px; padding: 0 0 0 14px; margin-right: 0; border: 1px solid #58585b; border-radius: 6px; background: #2a2a2c; color: #d4d4d6; font: inherit; }
.create .ic-9 { margin-left: 4px; }
.dtabs { flex: none; height: 27px; display: flex; align-items: center; padding: 3px 0 0 19px; gap: 17.500px; font-size: 12.500px; color: #8c8c8e; }
.dtabs .on { color: #e8e8e8; }
.dwork { flex: 1; min-height: 0; display: flex; }
.ddetails { flex: none; width: 270px; background: #1c1c1e; border-right: 1px solid #4f4f51; }
.ddhead { height: 37px; margin: 0 7px 0 6px; padding: 0 6px 0 13px; display: flex; align-items: center; justify-content: space-between; border-bottom: 1px solid #4f4f51; font-size: 13px; font-weight: 600; color: #e4e4e6; }
.sec { margin: 0 19px 0 20px; padding: 0 6px 0 5px; border-bottom: 1.500px solid #58585b; }
.sechead { display: flex; align-items: center; height: 46px; font-size: 13px; font-weight: 600; color: #eee; gap: 12px; padding-right: 5px; }
.sechead span { flex: 1; }
.sec-general { height: 249px; }
.sec-activity { height: 50px; }
.sec-coll { height: 104px; }
.sec-tags { border-bottom: 0; }
.kv { display: flex; justify-content: space-between; line-height: 22px; font-size: 11px; color: #bcbcbe; }
.kv b { font-weight: 600; color: #dedee0; }
.kv .ind { padding-right: 3px; }
.kv-ava { height: 29px; }
.kv-ava + .kv-ava { height: 32px; }
.kvwho { display: flex; align-items: center; margin-top: 7px; height: 22px; gap: 2px; }
.gdot { width: 15px; height: 15px; border-radius: 50%; background: #5bd163; }
.kvtot { text-align: right; }
.kvtot b { display: block; }
.kvtot small { display: block; font-size: 11px; line-height: 13px; color: #bcbcbe; margin-top: -4px; }
.dinput { width: 179px; height: 40px; margin-top: 4px; padding-left: 10px; display: flex; align-items: center; background: #000; border: 1px solid #3e3e40; border-radius: 6px; color: #8e8e90; font-size: 12px; }
.sec-tags .dinput { margin-top: 3px; }
.taglab { margin: 15px 0 8px; line-height: 14px; font-size: 10.500px; color: #9a9a9c; }
.taglab-user { margin: 10px 0 0 3px; }
.chips { display: flex; height: 22px; margin-bottom: 5px; }
.chips-1 { gap: 6px; }
.chips-2 { gap: 9px; }
.chips-3 { gap: 5px; margin: 7px 0 0; }
.chip { display: flex; align-items: center; gap: 5px; height: 22px; padding: 0 6px 0 4.500px; border-radius: 4px; background: #000; color: #f0f0f0; font-size: 10.800px; font-weight: 500; white-space: nowrap; }
.chip .ic { stroke-width: 1.500; color: #cfcfcf; }
.chip-wide { gap: 8px; }
.dtable { flex: 1; min-width: 0; display: flex; flex-direction: column; margin-top: 3px; background: #000; }
.dtool { flex: none; height: 39px; margin-right: 5px; display: flex; align-items: center; justify-content: space-between; padding: 0 23px 0 17px; border-top: 1px solid #4f4f51; color: #bcbcbe; font-size: 11px; }
.dtoolright { display: flex; align-items: center; gap: 3px; color: #d0d0d2; }
.vtoggle { width: 73px; height: 28px; display: flex; align-items: center; margin-right: 14px; padding-left: 3px; border: 1px solid #5a5a5c; border-radius: 5px; background: #2a2a2c; color: #eee; }
.vbtn { display: flex; align-items: center; justify-content: center; width: 23px; height: 22px; border: 1px solid #d0d0d0; border-radius: 4px; background: #000; }
.vgrid { margin-left: 6px; }
.vsep { width: 1px; height: 10px; background: #666; margin: 0 6px 0 5px; }
.dfilter { flex: none; height: 48px; padding: 12px 0 0 8px; border-top: 1px solid #4f4f51; border-bottom: 1px solid #4f4f51; }
.fbox { height: 30px; display: flex; align-items: center; gap: 4px; padding-left: 6px; background: #1c1c1e; border: 1px solid #58585b; border-right: 0; border-radius: 6px 0 0 6px; }
.fchip { height: 24px; display: flex; align-items: center; gap: 2px; padding: 0 4px; border-radius: 4px; background: #000; color: #a8a8aa; font-size: 11px; white-space: pre; letter-spacing: -.3px; }
.fchip b { font-weight: 500; color: #eee; }
.bluei { color: #4a90e2; margin-left: 1px; }
.dgrid { display: grid; grid-template-columns: 39px 48px 175px 243px 141px 158px 1fr; align-items: center; padding-left: 17px; }
.dthead { flex: none; height: 45px; border-bottom: 1px solid #4f4f51; color: #e8e8e8; font-size: 11.500px; font-weight: 500; }
.dth { position: relative; display: flex; align-items: center; }
.dth-title { width: 137px; justify-content: space-between; }
.dth-wave { width: 212px; justify-content: space-between; margin-left: -2px; }
.hnd { width: 10px; height: 15px; color: #eee; margin-left: auto; }
.thline { width: 1.500px; height: 27px; margin-left: 7px; background: #e8e8e8; }
.drow { flex: none; height: 55.500px; font-family: "Liberation Sans", Arial, sans-serif; font-size: 10.800px; color: #c4c4c6; }
.drow.alt { background: #1c1c1e; }
.drow-last { height: 54px; border-bottom: 2px solid #4f4f51; }
.cb { display: block; width: 13px; height: 13px; border: 1px solid #3c3c3e; border-radius: 3px; background: #000; flex: none; }
.stopbtn { display: flex; align-items: center; justify-content: center; width: 28px; height: 28px; margin-left: -1px; border: 1.500px solid #4a86e8; border-radius: 50%; }
.stopbtn i { width: 8px; height: 8px; background: #4a86e8; }
.dmic { width: 24px; height: 24px; color: #f2f2f2; stroke-width: 1.500; }
.wave { width: 146px; height: 30px; fill: none; stroke: #c0c0c2; stroke-width: .800; }
.wave-live { stroke-width: 1.300; }
.wave-shift { margin-left: 2px; }
.wblue { stroke: #3f7fe8; }
.wwhite { stroke: #f4f4f4; }
.wmark { fill: #f08a24; stroke: none; }
.song { width: 52px; height: 20px; line-height: 20px; text-align: center; border-radius: 10px; background: #d4d4d6; color: #555; }
.dpager { flex: none; height: 40px; display: flex; align-items: center; justify-content: flex-end; padding-right: 7px; color: #eee; font-size: 13px; }
.prev { color: #8c8c8e; margin: 0 23px 0 14px; }
.page { width: 19px; height: 26px; line-height: 26px; text-align: center; margin-right: 7px; }
.page.on { background: #f0f0f0; color: #222; }
.next { margin: 0 11px 0 6.500px; }
.dscroll { flex: 1; background: #fff; border-top: 1px solid #777; border-bottom: 2px solid #666; border-radius: 0 0 6px 0; padding-top: 2px; }
.dscroll i { display: block; width: 434px; height: 6px; border-radius: 3px; background: #bcbcbc; }

/* popover */
.popover { position: absolute; left: 995px; top: 146px; width: 399px; height: 236px; display: flex; flex-direction: column; background: #1c1c1e; border: 1px solid #3a3a3c; box-shadow: 0 0 4px rgba(0,0,0,.6); color: #c8c8ca; font-size: 11.500px; }
.pophead { flex: none; height: 40px; display: flex; align-items: center; padding: 0 17px 0 12px; }
.toggle { width: 24px; height: 12px; border-radius: 6px; background: #0a6fe0; display: flex; justify-content: flex-end; padding: 1px; }
.toggle i { width: 10px; height: 10px; border-radius: 50%; background: #fff; }
.poplabel { margin-left: 7px; flex: 1; }
.popreset { display: flex; align-items: center; gap: 8px; }
.popinfo { flex: none; height: 30px; display: flex; align-items: center; gap: 7px; padding-left: 11px; background: #0a2a4c; border: 1px solid #123f70; color: #d4d4d6; }
.poplists { flex: 1; min-height: 0; display: flex; background: #161618; }
.poplist { position: relative; display: flex; width: 199px; overflow: hidden; }
.poplist-r { width: 198px; }
.popsel { flex: 1; margin-top: -6.500px; padding: 0 12px 0 12px; }
.psitem { height: 27.300px; display: flex; align-items: center; gap: 6px; }
.psitem span { flex: 1; }
.psitem-2 { height: 41px; line-height: 13.500px; }
.psitem .hnd { width: 8px; height: 13px; color: #c8c8ca; margin-right: 3px; align-self: center; }
.psitem-2 .hnd { margin-top: -13px; }
.cbon { position: relative; width: 12px; height: 12px; border-radius: 2px; background: #1477e8; flex: none; }
.cbon::after { content: ""; position: absolute; left: 3.500px; top: 1px; width: 4px; height: 7.500px; border: solid #fff; border-width: 0 1.800px 1.800px 0; transform: rotate(40deg); }
.popun { flex: 1; padding: 9px 0 0 12px; }
.unt { line-height: 13px; margin-bottom: 6px; }
.puitem { height: 26px; display: flex; align-items: center; gap: 6px; }
.poptrack { flex: none; width: 12px; background: #fff; }
.poptrack i { display: block; width: 6px; margin-left: 3px; background: #b4b4b4; border-radius: 3px; }
.track-a i { margin-top: 32px; height: 77px; }
.track-b i { margin-top: 2px; height: 32px; }
```
